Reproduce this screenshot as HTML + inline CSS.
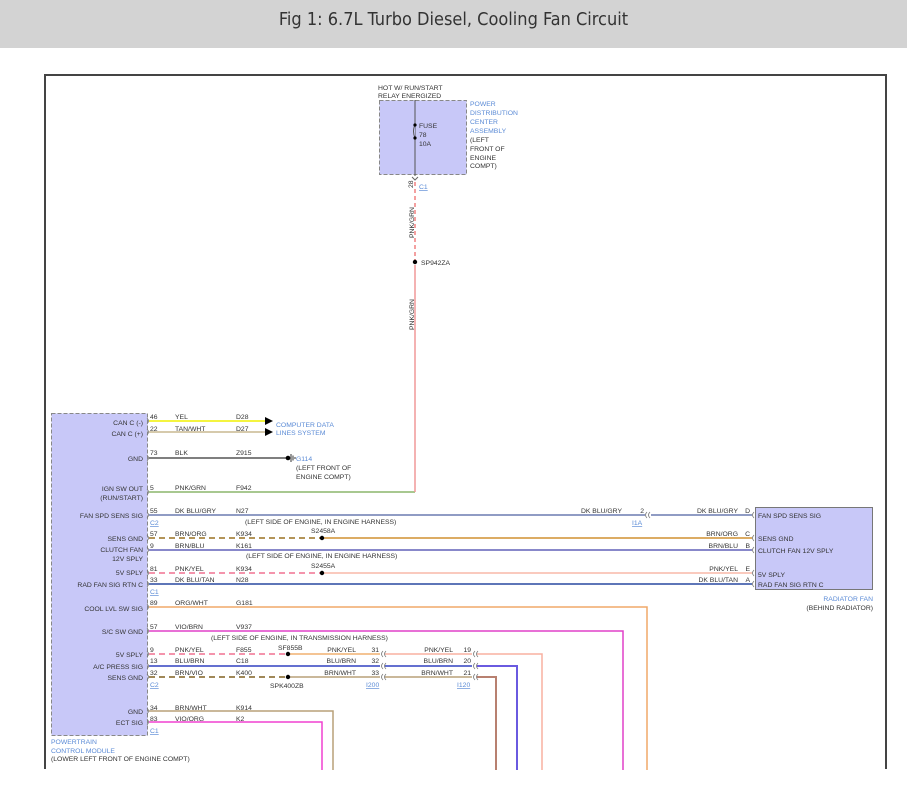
<!DOCTYPE html>
<html><head><meta charset="utf-8"><style>
html,body{margin:0;padding:0;background:#fff;width:907px;height:800px;overflow:hidden}
.hd{position:absolute;left:0;top:0;width:907px;height:48px;background:#d3d3d3;text-align:center;font:18px/40px "DejaVu Sans Condensed","Liberation Sans Narrow","Liberation Sans",sans-serif;color:#333;font-weight:300}
svg{position:absolute;left:0;top:0}
text{font-family:"Liberation Sans",sans-serif;font-size:6.8px;fill:#333}
.b{fill:#5b8bd6}
.r{text-anchor:end}
.u{fill:#5b8bd6;text-decoration:underline}
</style></head><body>
<div class="hd">Fig 1: 6.7L Turbo Diesel, Cooling Fan Circuit</div>
<svg width="907" height="800" viewBox="0 0 907 800">
<path d="M45,769 V75 H886 V769" fill="none" stroke="#444" stroke-width="2"/>

<text x="378" y="90">HOT W/ RUN/START</text>
<text x="378" y="98">RELAY ENERGIZED</text>
<rect x="379.5" y="100.5" width="87" height="74" fill="#c8c8f8" stroke="#888" stroke-dasharray="4,2"/>
<line x1="415" y1="100" x2="415" y2="176" stroke="#555" stroke-width="1"/>
<path d="M415,125 q-3,6 0,13" fill="#c8c8f8" stroke="#555"/>
<circle cx="415" cy="125" r="1.6" fill="#000"/><circle cx="415" cy="138" r="1.6" fill="#000"/>
<text x="419" y="128">FUSE</text><text x="419" y="137">78</text><text x="419" y="146">10A</text>
<text x="470" y="106" class="b">POWER</text><text x="470" y="115" class="b">DISTRIBUTION</text>
<text x="470" y="124" class="b">CENTER</text><text x="470" y="133" class="b">ASSEMBLY</text>
<text x="470" y="142">(LEFT</text><text x="470" y="151">FRONT OF</text><text x="470" y="160">ENGINE</text><text x="470" y="168">COMPT)</text>
<path d="M412,177 l3,3 l3,-3" fill="none" stroke="#666"/>
<text x="413" y="188" transform="rotate(-90 413 188)" font-size="6">28</text>
<text x="419" y="189" class="u" font-size="7">C1</text>
<line x1="415" y1="182" x2="415" y2="262" stroke="#f08080" stroke-width="1.5" stroke-dasharray="4,3"/>
<text x="414" y="238" transform="rotate(-90 414 238)">PNK/GRN</text>
<circle cx="415" cy="262" r="2.2" fill="#000"/>
<text x="421" y="265">SP942ZA</text>
<text x="414" y="330" transform="rotate(-90 414 330)">PNK/GRN</text>

<rect x="51.5" y="413.5" width="96" height="322" fill="#c8c8f8" stroke="#888" stroke-dasharray="4,2"/>

<g fill="none" stroke-width="1.5">
<line x1="149" y1="421" x2="265" y2="421" stroke="#f0f000"/>
<line x1="149" y1="432" x2="265" y2="432" stroke="#c8b890"/>
<line x1="149" y1="458" x2="286" y2="458" stroke="#555"/>
<path d="M149,492 H415" stroke="#a8c890" stroke-width="2"/>
<path d="M415,492 V265" stroke="#f09898" stroke-width="1.5"/>
<line x1="149" y1="515" x2="645" y2="515" stroke="#6c7cb0"/>
<line x1="651" y1="515" x2="752" y2="515" stroke="#6c7cb0"/>
<line x1="149" y1="538" x2="322" y2="538" stroke="#9a7020" stroke-dasharray="6,4"/>
<line x1="322" y1="538" x2="752" y2="538" stroke="#d09030"/>
<line x1="149" y1="550" x2="752" y2="550" stroke="#6060b8"/>
<line x1="149" y1="573" x2="322" y2="573" stroke="#f07090" stroke-dasharray="6,4"/>
<line x1="322" y1="573" x2="752" y2="573" stroke="#f8b8a8"/>
<line x1="149" y1="584" x2="752" y2="584" stroke="#2848a0"/>
<path d="M149,607 H647 V770" stroke="#f0a868"/>
<path d="M149,631 H623 V770" stroke="#e040c8"/>
<line x1="149" y1="654" x2="288" y2="654" stroke="#f07090" stroke-dasharray="6,4"/>
<line x1="288" y1="654" x2="380" y2="654" stroke="#f0b070"/>
<path d="M385,654 H472" stroke="#f8b0a0"/>
<path d="M477,654 H542 V770" stroke="#f8b0a0"/>
<line x1="149" y1="666" x2="380" y2="666" stroke="#3040c0"/>
<line x1="385" y1="666" x2="472" y2="666" stroke="#3040c0"/>
<path d="M477,666 H517 V770" stroke="#6a5ae0" stroke-width="2"/>
<line x1="149" y1="677" x2="288" y2="677" stroke="#806020" stroke-dasharray="6,4"/>
<line x1="288" y1="677" x2="380" y2="677" stroke="#b8a078"/>
<line x1="385" y1="677" x2="472" y2="677" stroke="#b8a078"/>
<path d="M477,677 H496 V770" stroke="#b88070" stroke-width="2"/>
<path d="M149,711 H333 V770" stroke="#b8a078"/>
<path d="M149,722 H322 V770" stroke="#f040d0"/>
</g>
<path d="M265,417 l8,4 l-8,4z M265,428 l8,4 l-8,4z" fill="#000"/>
<circle cx="288" cy="458" r="2.3" fill="#000"/>
<path d="M291,454 v8 M293,455.5 v5 M295,457 v2" stroke="#333"/>
<text x="296" y="461" class="b">G114</text>
<text x="296" y="470">(LEFT FRONT OF</text><text x="296" y="479">ENGINE COMPT)</text>
<text x="276" y="427" class="b">COMPUTER DATA</text><text x="276" y="435" class="b">LINES SYSTEM</text>
<circle cx="322" cy="538" r="2.2" fill="#000"/><circle cx="322" cy="573" r="2.2" fill="#000"/>
<circle cx="288" cy="654" r="2.2" fill="#000"/><circle cx="288" cy="677" r="2.2" fill="#000"/>
<text x="311" y="533">S2458A</text><text x="311" y="568">S2455A</text>
<text x="278" y="650">SF855B</text><text x="270" y="688">SPK400ZB</text>

<g fill="none" stroke="#777" stroke-width="0.8">
<path d="M147,418 q3,3 0,6 M147,429 q3,3 0,6 M147,455 q3,3 0,6 M147,489 q3,3 0,6 M147,512 q3,3 0,6 M147,535 q3,3 0,6 M147,547 q3,3 0,6 M147,570 q3,3 0,6 M147,581 q3,3 0,6 M147,604 q3,3 0,6 M147,628 q3,3 0,6 M147,651 q3,3 0,6 M147,663 q3,3 0,6 M147,674 q3,3 0,6 M147,708 q3,3 0,6 M147,719 q3,3 0,6"/>
<path d="M650,512 q-3,3 0,6 M647,512 q-3,3 0,6"/>
<path d="M383,651 q-3,3 0,6 M386,651 q-3,3 0,6 M383,663 q-3,3 0,6 M386,663 q-3,3 0,6 M383,674 q-3,3 0,6 M386,674 q-3,3 0,6"/>
<path d="M475,651 q-3,3 0,6 M478,651 q-3,3 0,6 M475,663 q-3,3 0,6 M478,663 q-3,3 0,6 M475,674 q-3,3 0,6 M478,674 q-3,3 0,6"/>
<path d="M754,512 q-3,3 0,6 M754,535 q-3,3 0,6 M754,547 q-3,3 0,6 M754,570 q-3,3 0,6 M754,581 q-3,3 0,6"/>
</g>

<text x="143" y="425" class="r">CAN C (-)</text>
<text x="143" y="436" class="r">CAN C (+)</text>
<text x="143" y="461" class="r">GND</text>
<text x="143" y="491" class="r">IGN SW OUT</text>
<text x="143" y="500" class="r">(RUN/START)</text>
<text x="143" y="518" class="r">FAN SPD SENS SIG</text>
<text x="143" y="541" class="r">SENS GND</text>
<text x="143" y="552" class="r">CLUTCH FAN</text>
<text x="143" y="561" class="r">12V SPLY</text>
<text x="143" y="575" class="r">5V SPLY</text>
<text x="143" y="587" class="r">RAD FAN SIG RTN C</text>
<text x="143" y="611" class="r">COOL LVL SW SIG</text>
<text x="143" y="634" class="r">S/C SW GND</text>
<text x="143" y="657" class="r">5V SPLY</text>
<text x="143" y="669" class="r">A/C PRESS SIG</text>
<text x="143" y="680" class="r">SENS GND</text>
<text x="143" y="714" class="r">GND</text>
<text x="143" y="725" class="r">ECT SIG</text>
<text x="51" y="744" class="b">POWERTRAIN</text>
<text x="51" y="753" class="b">CONTROL MODULE</text>
<text x="51" y="761">(LOWER LEFT FRONT OF ENGINE COMPT)</text>

<text x="150" y="419">46</text><text x="175" y="419">YEL</text><text x="236" y="419">D28</text>
<text x="150" y="431">22</text><text x="175" y="431">TAN/WHT</text><text x="236" y="431">D27</text>
<text x="150" y="455">73</text><text x="175" y="455">BLK</text><text x="236" y="455">Z915</text>
<text x="150" y="490">5</text><text x="175" y="490">PNK/GRN</text><text x="236" y="490">F942</text>
<text x="150" y="513">55</text><text x="175" y="513">DK BLU/GRY</text><text x="236" y="513">N27</text>
<text x="150" y="525" class="u">C2</text>
<text x="245" y="524">(LEFT SIDE OF ENGINE, IN ENGINE HARNESS)</text>
<text x="150" y="536">57</text><text x="175" y="536">BRN/ORG</text><text x="236" y="536">K934</text>
<text x="150" y="548">9</text><text x="175" y="548">BRN/BLU</text><text x="236" y="548">K161</text>
<text x="246" y="558">(LEFT SIDE OF ENGINE, IN ENGINE HARNESS)</text>
<text x="150" y="571">81</text><text x="175" y="571">PNK/YEL</text><text x="236" y="571">K934</text>
<text x="150" y="582">33</text><text x="175" y="582">DK BLU/TAN</text><text x="236" y="582">N28</text>
<text x="150" y="594" class="u">C1</text>
<text x="150" y="605">89</text><text x="175" y="605">ORG/WHT</text><text x="236" y="605">G181</text>
<text x="150" y="629">57</text><text x="175" y="629">VIO/BRN</text><text x="236" y="629">V937</text>
<text x="211" y="640">(LEFT SIDE OF ENGINE, IN TRANSMISSION HARNESS)</text>
<text x="150" y="652">9</text><text x="175" y="652">PNK/YEL</text><text x="236" y="652">F855</text>
<text x="150" y="663">13</text><text x="175" y="663">BLU/BRN</text><text x="236" y="663">C18</text>
<text x="150" y="675">32</text><text x="175" y="675">BRN/VIO</text><text x="236" y="675">K400</text>
<text x="150" y="687" class="u">C2</text>
<text x="150" y="710">34</text><text x="175" y="710">BRN/WHT</text><text x="236" y="710">K914</text>
<text x="150" y="721">83</text><text x="175" y="721">VIO/ORG</text><text x="236" y="721">K2</text>
<text x="150" y="733" class="u">C1</text>

<text x="356" y="652" class="r">PNK/YEL</text><text x="379" y="652" class="r">31</text>
<text x="356" y="663" class="r">BLU/BRN</text><text x="379" y="663" class="r">32</text>
<text x="356" y="675" class="r">BRN/WHT</text><text x="379" y="675" class="r">33</text>
<text x="366" y="687" class="u">I200</text>
<text x="453" y="652" class="r">PNK/YEL</text><text x="471" y="652" class="r">19</text>
<text x="453" y="663" class="r">BLU/BRN</text><text x="471" y="663" class="r">20</text>
<text x="453" y="675" class="r">BRN/WHT</text><text x="471" y="675" class="r">21</text>
<text x="457" y="687" class="u">I120</text>
<text x="622" y="513" class="r">DK BLU/GRY</text><text x="644" y="513" class="r">2</text>
<text x="632" y="525" class="u">I1A</text>

<rect x="755.5" y="507.5" width="117" height="82" fill="#c8c8f8" stroke="#777"/>
<text x="738" y="513" class="r">DK BLU/GRY</text><text x="750" y="513" class="r">D</text>
<text x="738" y="536" class="r">BRN/ORG</text><text x="750" y="536" class="r">C</text>
<text x="738" y="548" class="r">BRN/BLU</text><text x="750" y="548" class="r">B</text>
<text x="738" y="571" class="r">PNK/YEL</text><text x="750" y="571" class="r">E</text>
<text x="738" y="582" class="r">DK BLU/TAN</text><text x="750" y="582" class="r">A</text>
<text x="758" y="518">FAN SPD SENS SIG</text>
<text x="758" y="541">SENS GND</text>
<text x="758" y="553">CLUTCH FAN 12V SPLY</text>
<text x="758" y="577">5V SPLY</text>
<text x="758" y="587">RAD FAN SIG RTN C</text>
<text x="873" y="601" class="b r">RADIATOR FAN</text>
<text x="873" y="610" class="r">(BEHIND RADIATOR)</text>
</svg>
</body></html>
